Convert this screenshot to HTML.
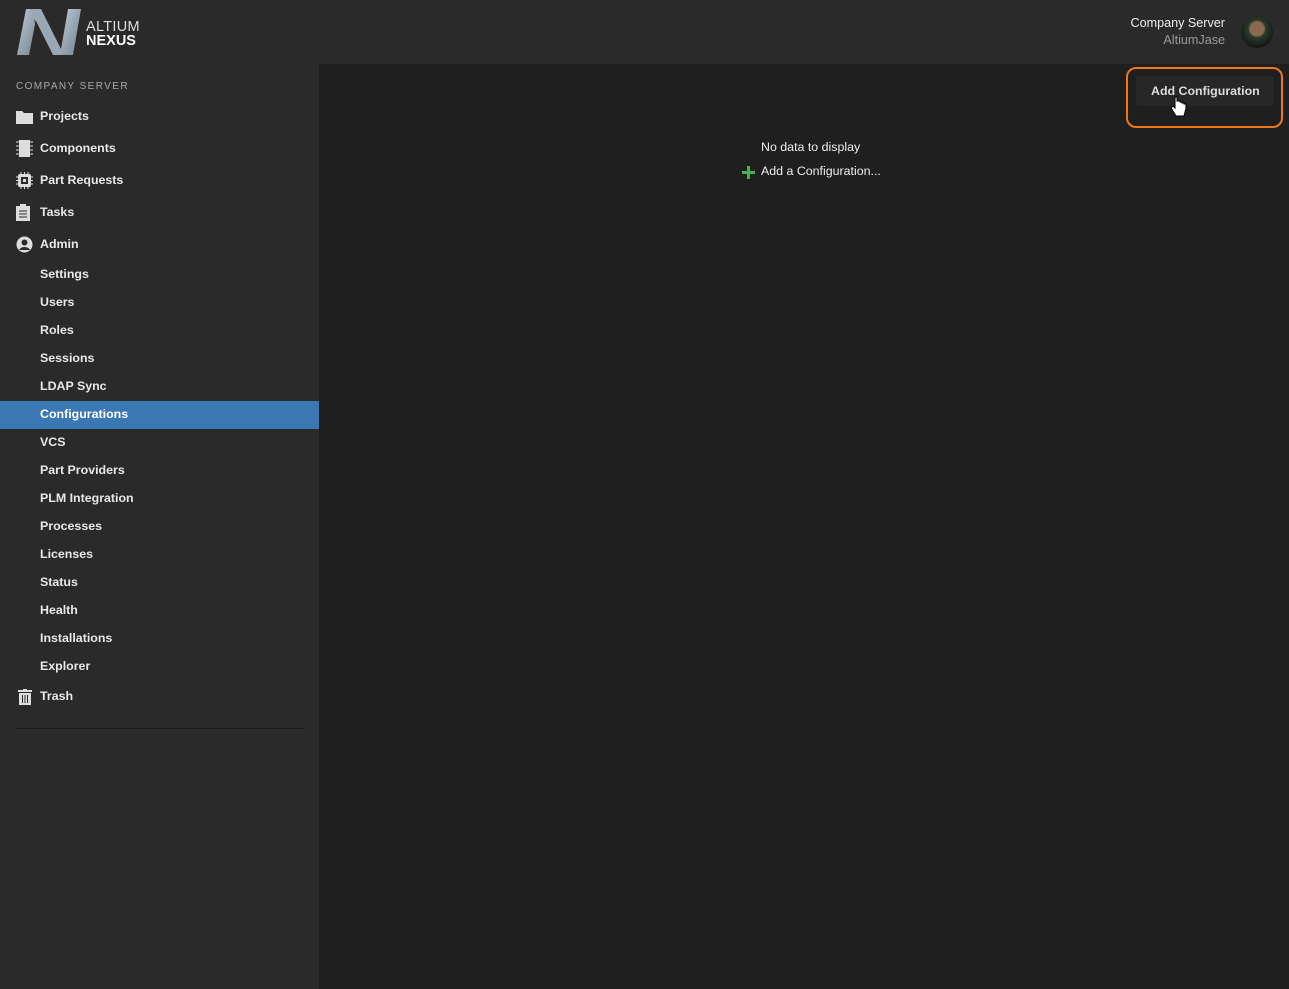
<!DOCTYPE html>
<html><head><style>
body{margin:0;width:1289px;height:989px;background:#1f1f1f;font-family:"Liberation Sans",sans-serif;overflow:hidden;position:relative}
.hdr{position:absolute;left:0;top:0;width:1289px;height:64px;background:#2a2a2a}
.side{position:absolute;left:0;top:64px;width:319px;height:925px;background:#2a2a2a}
.t{position:absolute;color:#e8e8e8;font-size:12.4px;font-weight:bold;white-space:nowrap}
.ic{position:absolute;left:16px}
</style></head><body>
<div class="hdr"></div>
<div class="side"></div>
<svg style="position:absolute;left:16px;top:8px" width="66" height="48" viewBox="0 0 66 48">
<defs><linearGradient id="g" x1="0" y1="0" x2="1" y2="1"><stop offset="0" stop-color="#c0ccd6"/><stop offset="1" stop-color="#6f7f8e"/></linearGradient></defs>
<path d="M10 1H22L13 47H1Z" fill="url(#g)"/><path d="M14 1H25L48 47H37Z" fill="#9aa8b5"/><path d="M18 10L24 28L22 32Z" fill="#2a2a2a"/><path d="M52 1H65L57 47H44Z" fill="url(#g)"/></svg>
<div class="t" style="left:86px;top:19px;font-weight:normal;font-size:14.5px;letter-spacing:0.3px;color:#ddd">ALTIUM</div>
<div class="t" style="left:86px;top:33px;font-size:14.5px;color:#fff">NEXUS</div>
<div class="t" style="left:16px;top:81px;font-size:10px;font-weight:normal;letter-spacing:1.4px;color:#aaa">COMPANY SERVER</div>
<svg class="ic" style="top:110px" width="17" height="14"><path d="M0 1h6l2 2h9v11H0z" fill="#ddd"/></svg>
<div class="t" style="left:40px;top:109px">Projects</div>
<svg class="ic" style="top:140px" width="17" height="17"><rect x="3" y="0" width="11" height="17" fill="#ddd"/><path d="M0 2h3M0 6h3M0 10h3M0 14h3M14 2h3M14 6h3M14 10h3M14 14h3" stroke="#ddd"/></svg>
<div class="t" style="left:40px;top:141px">Components</div>
<svg class="ic" style="top:172px" width="17" height="17"><rect x="2" y="2" width="13" height="13" rx="2" fill="#ddd"/><rect x="5" y="5" width="7" height="7" fill="#2a2a2a"/><rect x="7" y="7" width="3" height="3" fill="#ddd"/><path d="M5 0v2M8.5 0v2M12 0v2M5 15v2M8.5 15v2M12 15v2M0 5h2M0 8.5h2M0 12h2M15 5h2M15 8.5h2M15 12h2" stroke="#ddd"/></svg>
<div class="t" style="left:40px;top:173px">Part Requests</div>
<svg class="ic" style="top:204px" width="15" height="17"><rect x="0" y="2" width="14" height="15" fill="#ddd"/><rect x="4" y="0" width="6" height="4" fill="#ddd"/><path d="M3 7h8M3 10h8M3 13h8" stroke="#2a2a2a"/></svg>
<div class="t" style="left:40px;top:205px">Tasks</div>
<svg class="ic" style="top:236px" width="17" height="17"><circle cx="8.5" cy="8.5" r="8" fill="#ddd"/><circle cx="8.5" cy="6.5" r="3" fill="#2a2a2a"/><path d="M3 14c2-4 9-4 11 0" fill="#2a2a2a"/></svg>
<div class="t" style="left:40px;top:237px">Admin</div>
<div class="t" style="left:40px;top:267px">Settings</div>
<div class="t" style="left:40px;top:295px">Users</div>
<div class="t" style="left:40px;top:323px">Roles</div>
<div class="t" style="left:40px;top:351px">Sessions</div>
<div class="t" style="left:40px;top:379px">LDAP Sync</div>
<div style="position:absolute;left:0;top:401px;width:319px;height:28px;background:#3b78b3"></div>
<div class="t" style="left:40px;top:407px;color:#fff">Configurations</div>
<div class="t" style="left:40px;top:435px">VCS</div>
<div class="t" style="left:40px;top:463px">Part Providers</div>
<div class="t" style="left:40px;top:491px">PLM Integration</div>
<div class="t" style="left:40px;top:519px">Processes</div>
<div class="t" style="left:40px;top:547px">Licenses</div>
<div class="t" style="left:40px;top:575px">Status</div>
<div class="t" style="left:40px;top:603px">Health</div>
<div class="t" style="left:40px;top:631px">Installations</div>
<div class="t" style="left:40px;top:659px">Explorer</div>
<svg class="ic" style="top:689px;left:18px" width="14" height="16"><rect x="0" y="1" width="14" height="2" fill="#ddd"/><rect x="5" y="0" width="4" height="2" fill="#ddd"/><rect x="1" y="4" width="12" height="12" fill="#ddd"/><path d="M4.5 6v8M7 6v8M9.5 6v8" stroke="#2a2a2a"/></svg>
<div class="t" style="left:40px;top:689px">Trash</div>
<div style="position:absolute;left:16px;top:728px;width:288px;height:1px;background:#1a1a1a"></div>
<div class="t" style="right:64px;top:16px;font-weight:normal;font-size:12.6px;color:#eee">Company Server</div>
<div class="t" style="right:64px;top:33px;font-weight:normal;font-size:12.6px;color:#999">AltiumJase</div>
<div style="position:absolute;left:1241px;top:16px;width:32px;height:32px;border-radius:50%;background:radial-gradient(circle at 50% 40%,#8a6a50 0 28%,#2b3a2c 35%,#111 80%)"></div>
<div style="position:absolute;left:1126px;top:67px;width:153px;height:57px;border:2.5px solid #f07515;border-radius:10px"></div>
<div style="position:absolute;left:1136px;top:76px;width:138px;height:30px;background:#272727;border-radius:3px"></div>
<div class="t" style="left:1151px;top:84px;color:#ddd">Add Configuration</div>
<svg style="position:absolute;left:1171px;top:96px" width="16" height="22"><path d="M4 1v11l-2-2-2 2 5 8h8l2-8v-4h-2v-1h-2v-1h-2v-1H6V1z" fill="#fff" stroke="#000"/></svg>
<div class="t" style="left:761px;top:140px;font-weight:normal;color:#eee">No data to display</div>
<svg style="position:absolute;left:742px;top:166px" width="13" height="13"><path d="M6.5 0v13M0 6.5h13" stroke="#4caf50" stroke-width="3"/></svg>
<div class="t" style="left:761px;top:164px;font-weight:normal;color:#eee">Add a Configuration...</div>
</body></html>
